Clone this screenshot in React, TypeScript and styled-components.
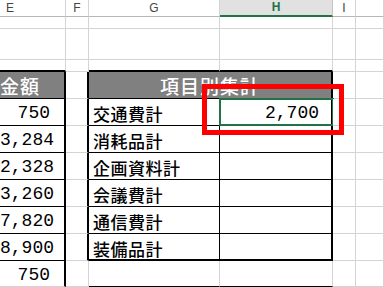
import React from 'react';
import styled, { createGlobalStyle, css } from 'styled-components';

const GlobalStyle = createGlobalStyle`
  html, body {
    margin: 0;
    padding: 0;
    background: #ffffff;
  }
`;

type Edge = 'g' | 't' | 'T';

const edge = (e: Edge) => {
  if (e === 'T') return '2px solid #000';
  if (e === 't') return '1px solid #000';
  return '1px solid #d4d4d4';
};

const Sheet = styled.div`
  position: relative;
  width: 384px;
  height: 287px;
  overflow: hidden;
  display: grid;
  grid-template-columns: 66px 23px 131px 113px 23px 1fr;
  grid-template-rows: 17px 12px 31px 12px 27px 27px 27px 27px 27px 27px 27px 1fr;
  font-family: 'Noto Sans CJK JP', 'Liberation Sans', sans-serif;
`;

const ColHeader = styled.div<{ $active?: boolean; $left?: boolean }>`
  box-sizing: border-box;
  display: flex;
  align-items: center;
  justify-content: ${(p) => (p.$left ? 'flex-start' : 'center')};
  padding-left: ${(p) => (p.$left ? '6px' : '0')};
  padding-bottom: 1px;
  border-right: 1px solid #d4d4d4;
  border-bottom: 1px solid #b7b7b7;
  font-family: 'Liberation Sans', Arial, sans-serif;
  font-size: 12px;
  color: #444;
  ${(p) =>
    p.$active &&
    css`
      background: #e1e1e1;
      color: #217346;
      font-weight: bold;
      border-bottom: 2px solid #217346;
      border-right-color: #c6c6c6;
    `}
`;

const Cell = styled.div<{ $r?: Edge; $b?: Edge; $head?: boolean; $span?: number }>`
  position: relative;
  box-sizing: border-box;
  min-width: 0;
  display: flex;
  align-items: center;
  white-space: nowrap;
  background: ${(p) => (p.$head ? '#808080' : '#ffffff')};
  border-right: ${(p) => edge(p.$r ?? 'g')};
  border-bottom: ${(p) => edge(p.$b ?? 'g')};
  ${(p) => p.$span && `grid-column: span ${p.$span};`}
`;

const HeadText = styled.span<{ $pad?: number }>`
  flex: 1;
  display: flex;
  justify-content: ${(p) => (p.$pad ? 'flex-end' : 'center')};
  padding-right: ${(p) => p.$pad ?? 0}px;
  padding-top: 1px;
  font-size: 19px;
  font-weight: 500;
  letter-spacing: 1px;
  color: #ffffff;
`;

const Label = styled.span`
  padding-left: 4px;
  padding-top: 3px;
  font-size: 17px;
  font-weight: 500;
  letter-spacing: 0.5px;
  color: #000;
`;

const Num = styled.span<{ $pad: number }>`
  flex: 1;
  display: flex;
  justify-content: flex-end;
  padding-right: ${(p) => p.$pad}px;
  padding-top: 2px;
  font-family: 'Liberation Mono', 'Courier New', monospace;
  font-size: 18px;
  color: #000;
`;

const Selection = styled.div`
  position: absolute;
  top: -1px;
  left: -1px;
  right: -3px;
  bottom: -1px;
  border: 2px solid #217346;
  pointer-events: none;
`;

const FillHandle = styled.div`
  position: absolute;
  right: -5px;
  bottom: -2px;
  width: 5px;
  height: 5px;
  background: #217346;
`;

const Callout = styled.div`
  position: absolute;
  left: 202px;
  top: 84px;
  width: 142px;
  height: 51px;
  box-sizing: border-box;
  border: 5px solid #ff0000;
  pointer-events: none;
`;

const amounts = ['750', '3,284', '2,328', '3,260', '7,820', '8,900'];
const items = ['交通費計', '消耗品計', '企画資料計', '会議費計', '通信費計', '装備品計'];
const totals = ['2,700', '', '', '', '', ''];

const BlankRow: React.FC<{ bottom?: boolean }> = ({ bottom }) => (
  <>
    <Cell $b={bottom ? 'T' : 'g'} />
    <Cell />
    <Cell $b={bottom ? 'T' : 'g'} />
    <Cell $b={bottom ? 'T' : 'g'} />
    <Cell />
    <Cell />
  </>
);

const App: React.FC = () => {
  return (
    <>
      <GlobalStyle />
      <Sheet>
        <ColHeader $left>E</ColHeader>
        <ColHeader>F</ColHeader>
        <ColHeader>G</ColHeader>
        <ColHeader $active>H</ColHeader>
        <ColHeader>I</ColHeader>
        <ColHeader />

        <BlankRow />
        <BlankRow />
        <BlankRow bottom />

        <Cell $head $r="T" $b="t">
          <HeadText $pad={36}>金額</HeadText>
        </Cell>
        <Cell $r="T" />
        <Cell $head $span={2} $r="T" $b="t">
          <HeadText>項目別集計</HeadText>
        </Cell>
        <Cell />
        <Cell />

        {items.map((item, i) => {
          const last = i === items.length - 1;
          return (
            <React.Fragment key={item}>
              <Cell $r="T" $b="t">
                <Num $pad={14}>{amounts[i]}</Num>
              </Cell>
              <Cell $r="T" />
              <Cell $r="t" $b={last ? 'T' : 't'}>
                <Label>{item}</Label>
              </Cell>
              <Cell $r="T" $b={last ? 'T' : 't'}>
                <Num $pad={12}>{totals[i]}</Num>
                {i === 0 && (
                  <Selection>
                    <FillHandle />
                  </Selection>
                )}
              </Cell>
              <Cell />
              <Cell />
            </React.Fragment>
          );
        })}

        <Cell $r="T">
          <Num $pad={14}>750</Num>
        </Cell>
        <Cell />
        <Cell $b="t" />
        <Cell $b="t" />
        <Cell />
        <Cell />

        <Callout />
      </Sheet>
    </>
  );
};

export default App;
